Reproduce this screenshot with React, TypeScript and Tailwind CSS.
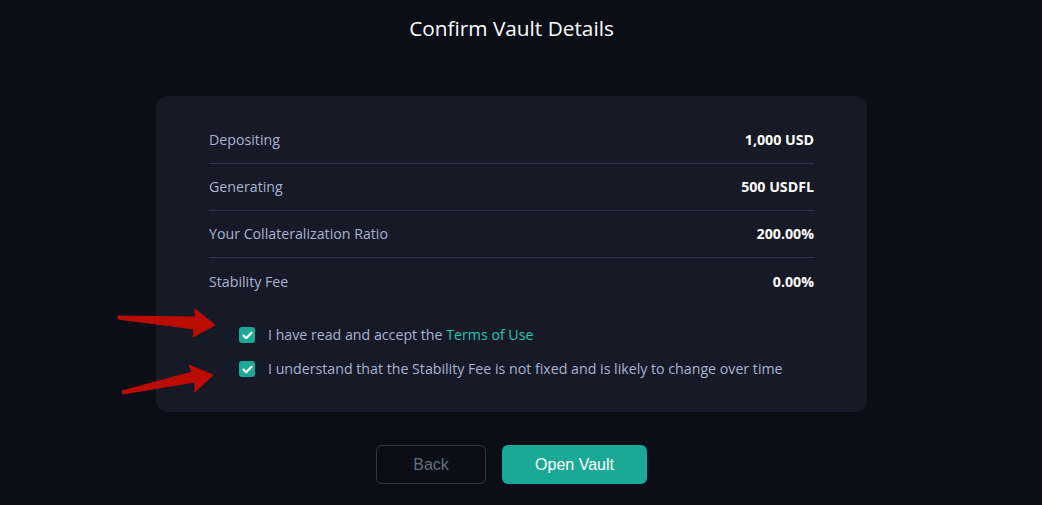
import React from "react";

const rows = [
  { label: "Depositing", value: "1,000 USD" },
  { label: "Generating", value: "500 USDFL" },
  { label: "Your Collateralization Ratio", value: "200.00%" },
  { label: "Stability Fee", value: "0.00%" },
];

const CheckBox = () => (
  <span className="flex h-4 w-4 shrink-0 items-center justify-center rounded-[3px] bg-[#1ca897]">
    <svg width="11" height="9" viewBox="0 0 11 9" fill="none">
      <path d="M1.5 4.6 L4.2 7.2 L9.5 1.8" stroke="white" strokeWidth="2.2" strokeLinecap="round" strokeLinejoin="round" />
    </svg>
  </span>
);

const App = () => {
  return (
    <div className="relative min-h-[505px] w-full bg-[#0b0e17] font-['Open_Sans',sans-serif]">
      <div className="flex w-[1023px] flex-col items-center">
        <h1 className="mt-[13px] text-[20.8px] leading-[30px] text-white">Confirm Vault Details</h1>

        <div className="mt-[53px] flex w-[711px] flex-col rounded-[12px] bg-[#161a26] px-[53px] pb-[31px] pt-[21px]">
          {rows.map((row, i) => (
            <div
              key={row.label}
              className={`flex h-[47px] items-center justify-between text-[14.2px] ${
                i < rows.length - 1 ? "border-b border-[#2f3345]" : ""
              }`}
            >
              <span className="text-[#a7b3d1]">{row.label}</span>
              <span className="font-bold text-white">{row.value}</span>
            </div>
          ))}

          <div className="ml-[30px] mt-[18px] flex flex-col gap-[10px] text-[14.2px] text-[#a7b3d1]">
            <label className="flex h-[24px] items-center gap-[13px]">
              <CheckBox />
              <span>
                I have read and accept the <span className="text-[#1dc7b4]">Terms of Use</span>
              </span>
            </label>
            <label className="flex h-[24px] items-center gap-[13px]">
              <CheckBox />
              <span>I understand that the Stability Fee is not fixed and is likely to change over time</span>
            </label>
          </div>
        </div>

        <div className="mt-[33px] flex gap-[16px] font-['Liberation_Sans',sans-serif] text-[16px]">
          <button className="h-[39px] w-[110px] rounded-[6px] border border-[#2c3a45] text-[#5f6f7b]">Back</button>
          <button className="h-[39px] w-[145px] rounded-[6px] bg-[#1aa897] text-white">Open Vault</button>
        </div>
      </div>

      <svg className="pointer-events-none absolute left-0 top-0" width="1042" height="505">
        <polygon
          points="118,316 195,317 195,309 215,325 193,337 194,329 118,319"
          fill="#bb0c02"
          stroke="#bb0c02"
          strokeWidth="1"
          strokeLinejoin="round"
        />
        <polygon
          points="122,391 192,372 189,365 213,375 195,392 195,382 123,394"
          fill="#bb0c02"
          stroke="#bb0c02"
          strokeWidth="1"
          strokeLinejoin="round"
        />
      </svg>
    </div>
  );
};

export default App;
